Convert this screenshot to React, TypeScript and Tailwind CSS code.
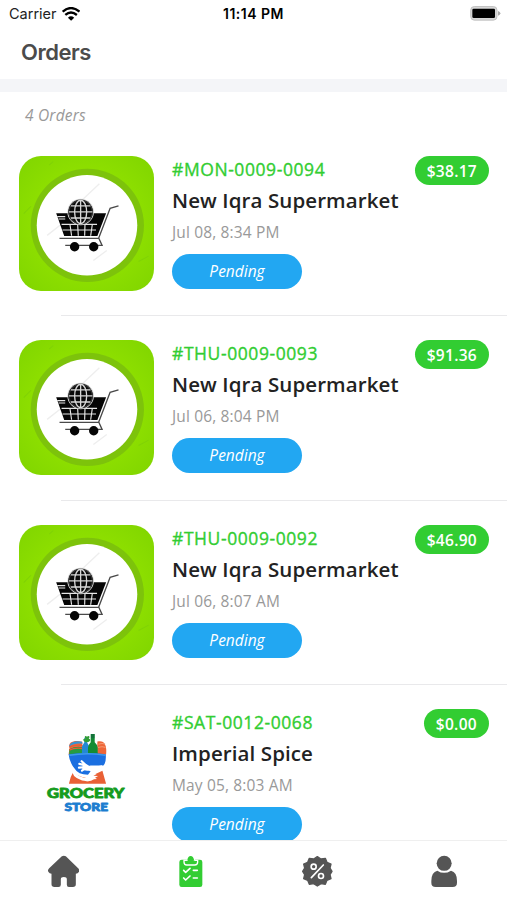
interface Order {
  id: string
  store: string
  date: string
  total: string
  logo: 'cart' | 'grocery'
}

const orders: Order[] = [
  { id: '#MON-0009-0094', store: 'New Iqra Supermarket', date: 'Jul 08, 8:34 PM', total: '$38.17', logo: 'cart' },
  { id: '#THU-0009-0093', store: 'New Iqra Supermarket', date: 'Jul 06, 8:04 PM', total: '$91.36', logo: 'cart' },
  { id: '#THU-0009-0092', store: 'New Iqra Supermarket', date: 'Jul 06, 8:07 AM', total: '$46.90', logo: 'cart' },
  { id: '#SAT-0012-0068', store: 'Imperial Spice', date: 'May 05, 8:03 AM', total: '$0.00', logo: 'grocery' },
]

function CartLogo() {
  return (
    <svg viewBox="28 33 403 403" className="block size-full">
      <defs>
        <radialGradient id="leaf" cx="50%" cy="50%" r="72%">
          <stop offset="0.5" stopColor="#8fe000" />
          <stop offset="1" stopColor="#7fd400" />
        </radialGradient>
      </defs>
      <rect x="28" y="33" width="403" height="403" fill="url(#leaf)" />
      <circle cx="232" cy="240" r="169" fill="#7dc30b" />
      <circle cx="231" cy="240" r="150" fill="#fff" />
      <path d="M218 163l50-47M112 270l48-38M250 345l40-30" stroke="#eeeeee" strokeWidth="4" />
      <path d="M42 205l22-22M385 348l30-16M118 60l12-10" stroke="#80d205" strokeWidth="3" />
      <path d="M139 204H288L262 272H163z" fill="#050505" />
      <path d="M325 182L300 189L266 278L276 300H166M149 279H268" fill="none" stroke="#4a4a4a" strokeWidth="4" />
      <path d="M142 214h24M146 221h20M155 237h106M158 254h100M180 236l5 35M203 236l2 35M225 236l-1 35M247 236l-5 35" stroke="#e6e6e6" strokeWidth="3.5" />
      <circle cx="212" cy="200" r="38" fill="#0a0a0a" stroke="#ddd" strokeWidth="3" />
      <g fill="none" stroke="#d8d8d8" strokeWidth="4">
        <circle cx="212" cy="200" r="35" stroke="#333" />
        <path d="M212 165v70M177 200h70M183 182h58M183 218h58" />
        <ellipse cx="212" cy="200" rx="18" ry="35" />
      </g>
      <circle cx="194" cy="304" r="14" fill="#050505" />
      <circle cx="251" cy="304" r="14" fill="#050505" />
    </svg>
  )
}

function GroceryLogo() {
  return (
    <svg viewBox="-32 28 403 403" className="block size-full">
      <path d="M119 142c-5-15 14-22 38-16l-1 38h-40z" fill="#ee6840" />
      <path d="M118 136c10-13 27-13 38-10l2 6c-15-2-28 0-40 8z" fill="#3794d1" />
      <path d="M118 148c13-8 28-9 40-6v22h-40z" fill="#269c42" />
      <path d="M118 142c16-8 28-7 40-5M118 151c16-8 28-7 40-5" fill="none" stroke="#e95b32" strokeWidth="4" />
      <path d="M202 125c20-5 29 9 26 39h-27z" fill="#ee6638" />
      <path d="M205 133q13-4 20 0M204 143q13-4 22 0" fill="none" stroke="#f59a72" strokeWidth="3" />
      <path d="M156 164v-24l7-13v-13h8v13l7 13v24z" fill="#2488d4" />
      <path d="M166 127c-11-8-5-12 1-10c-6-8 0-11 4-6c5-5 11 0 5 6c8 0 5 10-4 10z" fill="#329d37" />
      <path d="M182 103h12v24q9 8 9 17v21h-29v-21q0-9 8-17z" fill="#148c33" />
      <path d="M183 103h10v12h-10z" fill="#14723b" />
      <path d="M131 214q8 16 40 20l46-22l11 39H117q4-21 14-37z" fill="#e96035" />
      <path d="M116 163q56-8 111 0q2 24-7 34H180l4 14l-10 13q-30 0-39-17q-16-18-19-44z" fill="#1b6fe0" />
      <path d="M118 166q55-9 108 0" fill="none" stroke="#3f9bec" strokeWidth="5" />
      <path d="M148 192l14 3M147 203l17-1M155 184l13 12M156 212l12-8" stroke="#fff" strokeWidth="6.5" strokeLinecap="round" />
      <path d="M158 195q10-5 18 2q14 6 40-1l-1 14q-18 10-38 2q-14 2-20-5z" fill="#fff" />
      <path d="M130 213q7 24 45 26" fill="none" stroke="#fff" strokeWidth="9" />
      <path d="M168 229q14-10 32-7l-10 5l14 1l-9 5l6 4l-9 1q-14 9-28 4z" fill="#fff" />
      <g className="font-[Lato,sans-serif] font-black" strokeWidth="2.4" strokeLinejoin="round">
        <text x="52" y="293" textLength="231" lengthAdjust="spacingAndGlyphs" fill="#159b1d" stroke="#159b1d" className="text-[38px]">GROCERY</text>
        <text x="104" y="333" textLength="130" lengthAdjust="spacingAndGlyphs" fill="#1c7dd0" stroke="#1c7dd0" className="text-[33px]">STORE</text>
      </g>
    </svg>
  )
}

function StatusBar() {
  return (
    <div className="grid h-[27px] grid-cols-3 items-center font-[Inter,sans-serif] text-black">
      <div className="flex items-center gap-[5px] pl-[9px]">
        <span className="text-[14.5px] leading-[27px] text-[#222]">Carrier</span>
        <svg viewBox="186 17 56 42" className="h-[14px] w-[18.5px]">
          <g fill="none" stroke="#000" strokeWidth="7">
            <path d="M188 31Q213 9 239 31" />
            <path d="M196 41Q213 26 231 41" />
          </g>
          <path d="M204 49q9-8 19 0l-9.500 9.500z" />
        </svg>
      </div>
      <span className="text-center text-[14px] leading-[27px] font-semibold tracking-[0.5px]">11:14 PM</span>
      <svg viewBox="652 17 92 44" className="mr-[6px] h-[14.7px] w-[30.7px] justify-self-end">
        <rect x="654" y="18.5" width="79" height="41" rx="11" fill="#d7d7d7" stroke="#bbb" strokeWidth="2.5" />
        <rect x="659" y="25" width="68" height="28" rx="4" fill="#000" />
        <path d="M736 32q7 2 7 7t-7 7z" fill="#aaa" />
      </svg>
    </div>
  )
}

function OrderRow({ order }: { order: Order }) {
  return (
    <li className="h-[184.4px] shrink-0">
      <div className="flex h-[159.2px] pr-[18px] pl-[19px]">
        <div className="size-[135px] shrink-0 overflow-hidden rounded-[22px]">
          {order.logo === 'cart' ? <CartLogo /> : <GroceryLogo />}
        </div>
        <div className="ml-[18px] flex flex-1 flex-col items-start whitespace-nowrap">
          <div className="flex w-full items-start justify-between">
            <span className="text-[17.5px] leading-[27px] tracking-[0.58px] text-[#32cd32] [-webkit-text-stroke:0.35px_#32cd32]">{order.id}</span>
            <span className="h-[29px] rounded-full bg-[#32cd32] px-[12px] text-[15.5px] leading-[30px] font-semibold tracking-[0.3px] text-white">{order.total}</span>
          </div>
          <h2 className="mt-px text-[20.5px] leading-[29px] font-semibold tracking-[0.1px] text-[#222]">{order.store}</h2>
          <p className="mt-[5px] text-[15.5px] leading-[24px] tracking-[0.15px] text-[#999]">{order.date}</p>
          <span className="mt-[10px] h-[35px] w-[130px] rounded-full bg-[#22a7f2] text-center text-[15.5px] leading-[35px] text-white italic">Pending</span>
        </div>
      </div>
      <div className="ml-[61px] h-px bg-[#e9e9eb]" />
    </li>
  )
}

function TabBar() {
  return (
    <nav className="grid h-[60px] shrink-0 grid-cols-4 items-start justify-items-center border-t border-[#efefef] bg-white pt-[14px] text-[#555]">
      <svg viewBox="142.500 60 96 99" className="h-[33px] w-8" fill="currentColor">
        <path d="M187 64q6-4 12 0l37 36q6 6 2 11q-3 5-9 5v32q0 8-9 8h-12q-6 0-6-7v-16q0-7-9-7t-9 7v16q0 7-7 7h-12q-9 0-9-8v-32q-6 0-9-5q-4-5 2-11z" />
      </svg>
      <svg viewBox="523 60 96 99" className="h-[33px] w-8">
        <rect x="539" y="74" width="69" height="82" rx="7" fill="#32cd32" />
        <path d="M553 76h7q4 0 5-5q2-8 8-8t9 8q1 5 5 5h7v5q0 9-9 9h-24q-8 0-8-9z" fill="#32cd32" stroke="#fff" strokeWidth="4" />
        <path d="M563 75q2-12 10-12t10 12z" fill="#32cd32" />
        <path d="M552 106l6 6l13-12M552 129l6 6l13-12M581 106h12M581 129h12" fill="none" stroke="#fff" strokeWidth="5" strokeLinecap="round" strokeLinejoin="round" />
      </svg>
      <svg viewBox="144 60 96 99" className="h-[33px] w-8">
        <path d="M193 65L204 72L217 70L222 82L234 87L231 99L237 109L231 119L234 131L222 136L217 148L204 146L193 153L182 146L169 148L164 136L152 131L155 119L149 109L155 99L152 87L164 82L169 70L182 72z" fill="currentColor" stroke="currentColor" strokeWidth="4" strokeLinejoin="round" />
        <g fill="none" stroke="#fff" strokeWidth="5" strokeLinecap="round">
          <circle cx="182" cy="95" r="7.500" />
          <circle cx="204" cy="123" r="7.500" />
          <path d="M211 90l-36 38" />
        </g>
      </svg>
      <svg viewBox="524 60 96 99" className="h-[33px] w-8" fill="currentColor">
        <circle cx="572.500" cy="85" r="22.500" />
        <path d="M552 107q20 13 41 0q18 4 18 31v5q0 13-13 13h-51q-13 0-13-13v-5q0-27 18-31z" />
      </svg>
    </nav>
  )
}

export default function App() {
  return (
    <div className="flex h-[900px] w-[507px] flex-col overflow-hidden bg-white font-['Open_Sans',sans-serif]">
      <StatusBar />
      <header className="h-[65px] shrink-0 border-b-[13px] border-[#f4f5f8] pl-[21px]">
        <h1 className="font-[Inter,sans-serif] text-[22px] leading-[50px] font-semibold tracking-[-0.5px] text-[#4b4b4b]">Orders</h1>
      </header>
      <main className="flex min-h-0 flex-1 flex-col overflow-hidden">
        <p className="h-[64.1px] shrink-0 pt-[11px] pl-[25px] text-[15.5px] leading-[24px] tracking-[0.2px] text-[#999] italic">4 Orders</p>
        <ul className="flex flex-col">
          {orders.map((order) => (
            <OrderRow key={order.id} order={order} />
          ))}
        </ul>
      </main>
      <TabBar />
    </div>
  )
}
